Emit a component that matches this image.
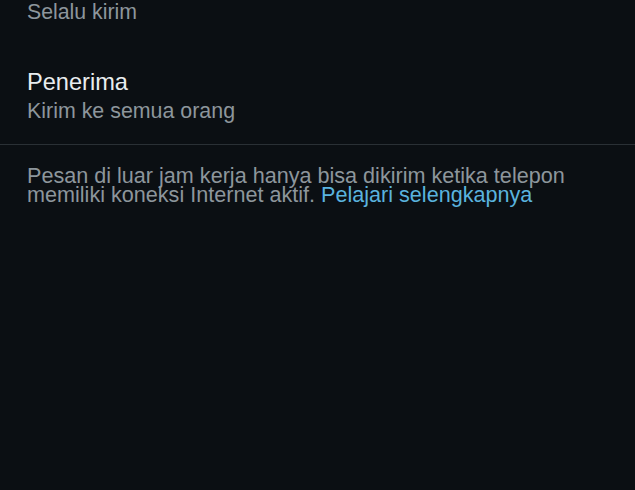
import React from 'react';

const App = () => {
  return (
    <div
      className="w-[635px] h-[490px] overflow-hidden bg-[#0b0f13]"
      style={{ fontFamily: '"Liberation Sans", Arial, sans-serif' }}
    >
      <div className="pl-[27px]">
        <p className="text-[21.3px] leading-6 text-[#8d969c]">Selalu kirim</p>
      </div>

      <div className="pl-[27px] pt-[44px]">
        <p className="text-[23.6px] leading-7 text-[#e9edef]">Penerima</p>
        <p className="mt-[3px] text-[21.4px] leading-6 text-[#8d969c]">Kirim ke semua orang</p>
      </div>

      <div className="mt-[21px] h-[1px] bg-[#2a3035]" />

      <p className="px-[27px] pt-[21px] text-[21.6px] leading-[19px] text-[#8d969c]">
        Pesan di luar jam kerja hanya bisa dikirim ketika telepon memiliki koneksi Internet aktif.{' '}
        <span className="text-[#5ab3de]">Pelajari selengkapnya</span>
      </p>
    </div>
  );
};

export default App;
